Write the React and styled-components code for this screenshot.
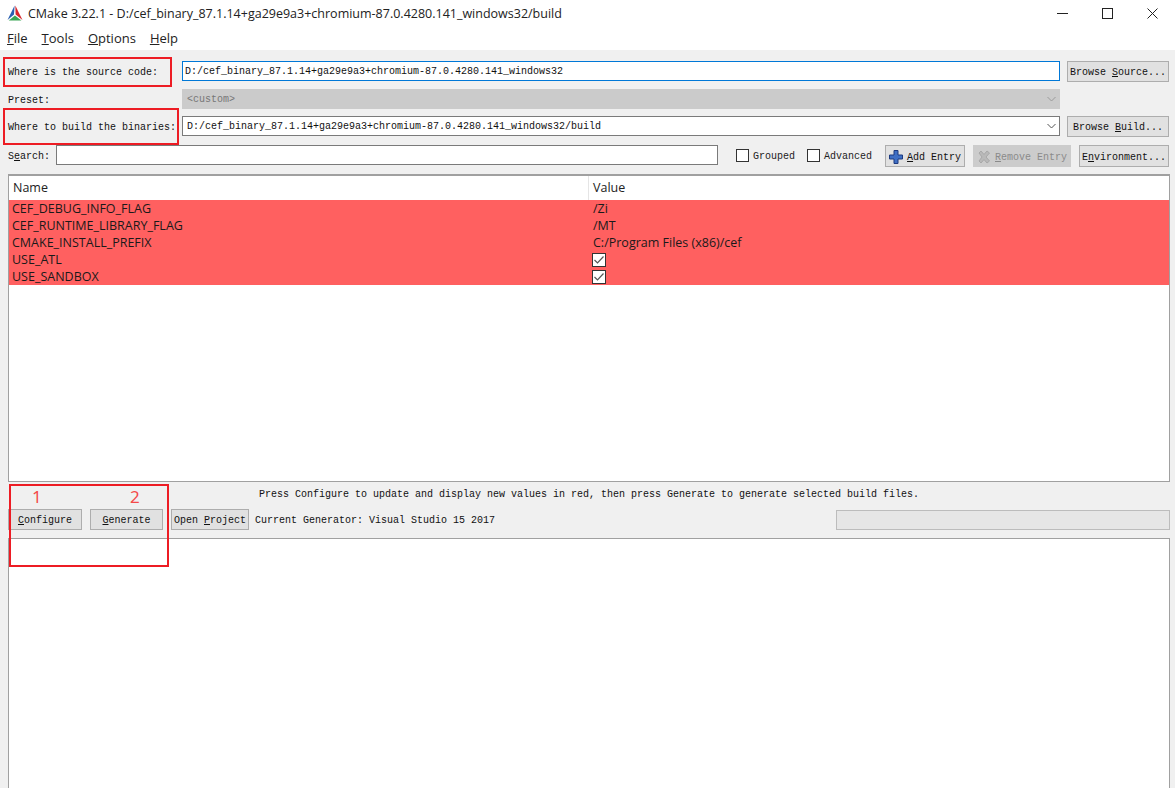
import React from 'react'
import styled, { createGlobalStyle } from 'styled-components'

const GlobalStyle = createGlobalStyle`
    html, body {
        margin: 0;
        padding: 0;
        background: #fff;
    }
    * {
        box-sizing: border-box;
    }
`

const uiFont = `'Open Sans', 'Noto Sans', 'Liberation Sans', sans-serif`
const monoFont = `'Liberation Mono', 'DejaVu Sans Mono', monospace`

const Window = styled.div`
    position: relative;
    width: 1175px;
    height: 788px;
    overflow: hidden;
    display: flex;
    flex-direction: column;
    background: #fff;
    font-family: ${uiFont};
    color: #111;
`

const TitleBar = styled.div`
    height: 26px;
    display: flex;
    align-items: center;
    padding-left: 7px;
    font-size: 12.5px;
    color: #222;
`

const TitleText = styled.span`
    margin-left: 5px;
    flex: 1;
`

const WinControls = styled.div`
    display: flex;
    align-items: center;
`

const WinBtn = styled.div`
    width: 45px;
    height: 26px;
    display: flex;
    align-items: center;
    justify-content: center;
    color: #222;
`

const MenuBar = styled.div`
    height: 24px;
    display: flex;
    align-items: center;
    padding-left: 7px;
    gap: 14px;
    font-size: 13px;
    color: #222;
`

const Content = styled.div`
    flex: 1;
    display: flex;
    flex-direction: column;
    min-height: 0;
    background: #f0f0f0;
    padding: 11px 5px 0 8px;
`

const FormRow = styled.div`
    height: ${p => p.$h}px;
    display: flex;
    align-items: flex-start;
`

const Label = styled.div`
    width: ${p => p.$w}px;
    height: 20px;
    line-height: 24px;
    font-family: ${monoFont};
    font-size: 10px;
    color: #111;
    white-space: nowrap;
    flex: none;
`

const Field = styled.div`
    position: relative;
    width: ${p => p.$w}px;
    height: 20px;
    line-height: ${p => p.$lh || 19}px;
    flex: none;
    padding-left: ${p => p.$pad || 2}px;
    font-family: ${monoFont};
    font-size: 10px;
    white-space: nowrap;
    background: ${p => (p.$disabled ? '#cbcbcb' : '#fff')};
    color: ${p => (p.$disabled ? '#777' : '#111')};
    border: 1px solid ${p => (p.$focused ? '#0078d7' : p.$disabled ? '#cbcbcb' : '#7a7a7a')};
`

const Chevron = styled.svg`
    position: absolute;
    right: 3px;
    top: 5px;
    width: 9px;
    height: 8px;
    color: ${p => (p.$disabled ? '#9a9a9a' : '#555')};
`

const Btn = styled.div`
    flex: none;
    width: ${p => p.$w}px;
    height: ${p => p.$h || 21}px;
    margin-left: ${p => p.$ml || 0}px;
    padding-top: 2px;
    display: flex;
    align-items: center;
    justify-content: center;
    gap: 4px;
    font-family: ${monoFont};
    font-size: 10px;
    white-space: nowrap;
    background: ${p => (p.$disabled ? '#cccccc' : '#e1e1e1')};
    color: ${p => (p.$disabled ? '#8a8a8a' : '#111')};
    border: 1px solid ${p => (p.$disabled ? '#cccccc' : '#adadad')};
`

const Check = styled.div`
    display: flex;
    align-items: center;
    flex: none;
    height: 20px;
    margin-left: ${p => p.$ml}px;
    font-family: ${monoFont};
    font-size: 10px;
    color: #222;
`

const CheckBox = styled.span`
    width: 13px;
    height: 13px;
    margin-right: 4px;
    background: #fff;
    border: 1px solid #333;
`

const CheckText = styled.span`
    margin-top: 3px;
`

const TableBox = styled.div`
    height: 308px;
    flex: none;
    display: flex;
    flex-direction: column;
    background: #fff;
    border: 1px solid #a0a0a0;
    border-top-width: 2px;
    font-size: 12.5px;
`

const TableHead = styled.div`
    height: 24px;
    display: grid;
    grid-template-columns: 580px 1fr;
    line-height: 24px;
    flex: none;
`

const HeadCell = styled.div`
    padding-left: ${p => p.$pad}px;
    border-right: ${p => (p.$sep ? '1px solid #e5e5e5' : 'none')};
    color: #222;
`

const TableRow = styled.div`
    height: 17px;
    display: grid;
    grid-template-columns: 580px 1fr;
    align-items: center;
    line-height: 17px;
    background: #ff6060;
    color: #1a1a1a;
`

const NameCell = styled.div`
    padding-left: 3px;
`

const ValueCell = styled.div`
    padding-left: 4px;
    display: flex;
    align-items: center;
`

const ValueCheck = styled.svg`
    width: 14px;
    height: 14px;
    margin-left: -1px;
    display: block;
`

const Hint = styled.div`
    height: 27px;
    flex: none;
    padding-top: 6px;
    line-height: 14px;
    text-align: center;
    font-family: ${monoFont};
    font-size: 10px;
    color: #111;
`

const ActionRow = styled.div`
    height: 21px;
    flex: none;
    display: flex;
    align-items: center;
    gap: 8px;
`

const Generator = styled.div`
    margin-left: -2px;
    padding-top: 1px;
    flex: 1;
    font-family: ${monoFont};
    font-size: 10px;
    color: #111;
`

const Progress = styled.div`
    width: 334px;
    height: 20px;
    background: #e6e6e6;
    border: 1px solid #bcbcbc;
`

const Output = styled.div`
    flex: 1;
    margin-top: 8px;
    background: #fff;
    border: 1px solid #a0a0a0;
    border-bottom: none;
`

const RedBox = styled.div`
    position: absolute;
    left: ${p => p.$x}px;
    top: ${p => p.$y}px;
    width: ${p => p.$w}px;
    height: ${p => p.$h}px;
    border: 2px solid #ed1c24;
`

const Mark = styled.span`
    position: absolute;
    left: ${p => p.$x}px;
    top: 486px;
    font-family: 'Noto Sans', sans-serif;
    font-size: 17px;
    line-height: 22px;
    color: #f44a4a;
`

const Logo = () => (
    <svg width="16" height="16" viewBox="0 0 16 16">
        <path d="M7.6 0.5 L0.5 15 L7 9.5 Z" fill="#2a5fb0" />
        <path d="M8.3 0.5 L15.5 15 L8.6 9.5 Z" fill="#d8262c" />
        <path d="M7.9 10.4 L1.8 15.5 L14.4 15.5 Z" fill="#3aa655" />
    </svg>
)

const ChevronDown = ({ disabled }) => (
    <Chevron $disabled={disabled} viewBox="0 0 9 8">
        <path d="M0.5 2 L4.5 6 L8.5 2" fill="none" stroke="currentColor" strokeWidth="1" />
    </Chevron>
)

const PlusIcon = () => (
    <svg width="14" height="14" viewBox="0 0 14 14">
        <path d="M5 0.5 H9 V5 H13.5 V9 H9 V13.5 H5 V9 H0.5 V5 H5 Z" fill="#3f6fc4" stroke="#1d3a80" strokeWidth="1" />
    </svg>
)

const CrossIcon = () => (
    <svg width="14" height="14" viewBox="0 0 14 14">
        <path d="M2 3 L4 1 L7 4.5 L10 1 L12.5 3 L9 7 L12.5 11 L10 13 L7 9.5 L4 13 L2 11 L5 7 Z" fill="#b9b9b9" stroke="#a8a8a8" strokeWidth="1" />
    </svg>
)

const CheckedBox = () => (
    <ValueCheck viewBox="0 0 14 14">
        <rect x="0.5" y="0.5" width="13" height="13" fill="#fff" stroke="#333" />
        <path d="M2.5 7 L5.5 10 L11.5 3.5" fill="none" stroke="#555" strokeWidth="1.2" />
    </ValueCheck>
)

const rows = [
    { name: 'CEF_DEBUG_INFO_FLAG', value: '/Zi' },
    { name: 'CEF_RUNTIME_LIBRARY_FLAG', value: '/MT' },
    { name: 'CMAKE_INSTALL_PREFIX', value: 'C:/Program Files (x86)/cef' },
    { name: 'USE_ATL', checked: true },
    { name: 'USE_SANDBOX', checked: true },
]

const srcPath = 'D:/cef_binary_87.1.14+ga29e9a3+chromium-87.0.4280.141_windows32'

function App() {
    return (
        <Window>
            <GlobalStyle />
            <TitleBar>
                <Logo />
                <TitleText>CMake 3.22.1 - {srcPath}/build</TitleText>
                <WinControls>
                    <WinBtn>
                        <svg width="11" height="11" viewBox="0 0 11 11"><path d="M0 5.5 H11" stroke="currentColor" /></svg>
                    </WinBtn>
                    <WinBtn>
                        <svg width="11" height="11" viewBox="0 0 11 11"><rect x="0.5" y="0.5" width="10" height="10" fill="none" stroke="currentColor" /></svg>
                    </WinBtn>
                    <WinBtn>
                        <svg width="11" height="11" viewBox="0 0 11 11"><path d="M0.5 0.5 L10.5 10.5 M10.5 0.5 L0.5 10.5" stroke="currentColor" /></svg>
                    </WinBtn>
                </WinControls>
            </TitleBar>
            <MenuBar>
                <span><u>F</u>ile</span>
                <span><u>T</u>ools</span>
                <span><u>O</u>ptions</span>
                <span><u>H</u>elp</span>
            </MenuBar>
            <Content>
                <FormRow $h={28}>
                    <Label $w={174}>Where is the source code:</Label>
                    <Field $w={878} $focused>{srcPath}</Field>
                    <Btn $w={102} $ml={7}><span>Browse <u>S</u>ource...</span></Btn>
                </FormRow>
                <FormRow $h={27}>
                    <Label $w={174}>Preset:</Label>
                    <Field $w={878} $disabled $pad={4}>&lt;custom&gt;<ChevronDown disabled /></Field>
                </FormRow>
                <FormRow $h={29}>
                    <Label $w={174}>Where to build the binaries:</Label>
                    <Field $w={878} $pad={4} $lh={20}>{srcPath}/build<ChevronDown /></Field>
                    <Btn $w={102} $ml={7}><span>Browse <u>B</u>uild...</span></Btn>
                </FormRow>
                <FormRow $h={29}>
                    <Label $w={48}>S<u>e</u>arch:</Label>
                    <Field $w={662} />
                    <Check $ml={18}><CheckBox /><CheckText>Grouped</CheckText></Check>
                    <Check $ml={12}><CheckBox /><CheckText>Advanced</CheckText></Check>
                    <Btn $w={80} $h={22} $ml={13}><PlusIcon /><span><u>A</u>dd Entry</span></Btn>
                    <Btn $w={98} $h={22} $ml={8} $disabled><CrossIcon /><span><u>R</u>emove Entry</span></Btn>
                    <Btn $w={90} $h={22} $ml={8}><span>E<u>n</u>vironment...</span></Btn>
                </FormRow>
                <TableBox>
                    <TableHead>
                        <HeadCell $pad={4} $sep>Name</HeadCell>
                        <HeadCell $pad={4}>Value</HeadCell>
                    </TableHead>
                    {rows.map(r => (
                        <TableRow key={r.name}>
                            <NameCell>{r.name}</NameCell>
                            <ValueCell>{r.checked ? <CheckedBox /> : r.value}</ValueCell>
                        </TableRow>
                    ))}
                </TableBox>
                <Hint>Press Configure to update and display new values in red, then press Generate to generate selected build files.</Hint>
                <ActionRow>
                    <Btn $w={74}><span><u>C</u>onfigure</span></Btn>
                    <Btn $w={73}><span><u>G</u>enerate</span></Btn>
                    <Btn $w={78}><span>Open <u>P</u>roject</span></Btn>
                    <Generator>Current Generator: Visual Studio 15 2017</Generator>
                    <Progress />
                </ActionRow>
                <Output />
            </Content>
            <RedBox $x={3} $y={57} $w={169} $h={30} />
            <RedBox $x={3} $y={108} $w={176} $h={37} />
            <RedBox $x={9} $y={484} $w={160} $h={83} />
            <Mark $x={32}>1</Mark>
            <Mark $x={130}>2</Mark>
        </Window>
    )
}

export default App
